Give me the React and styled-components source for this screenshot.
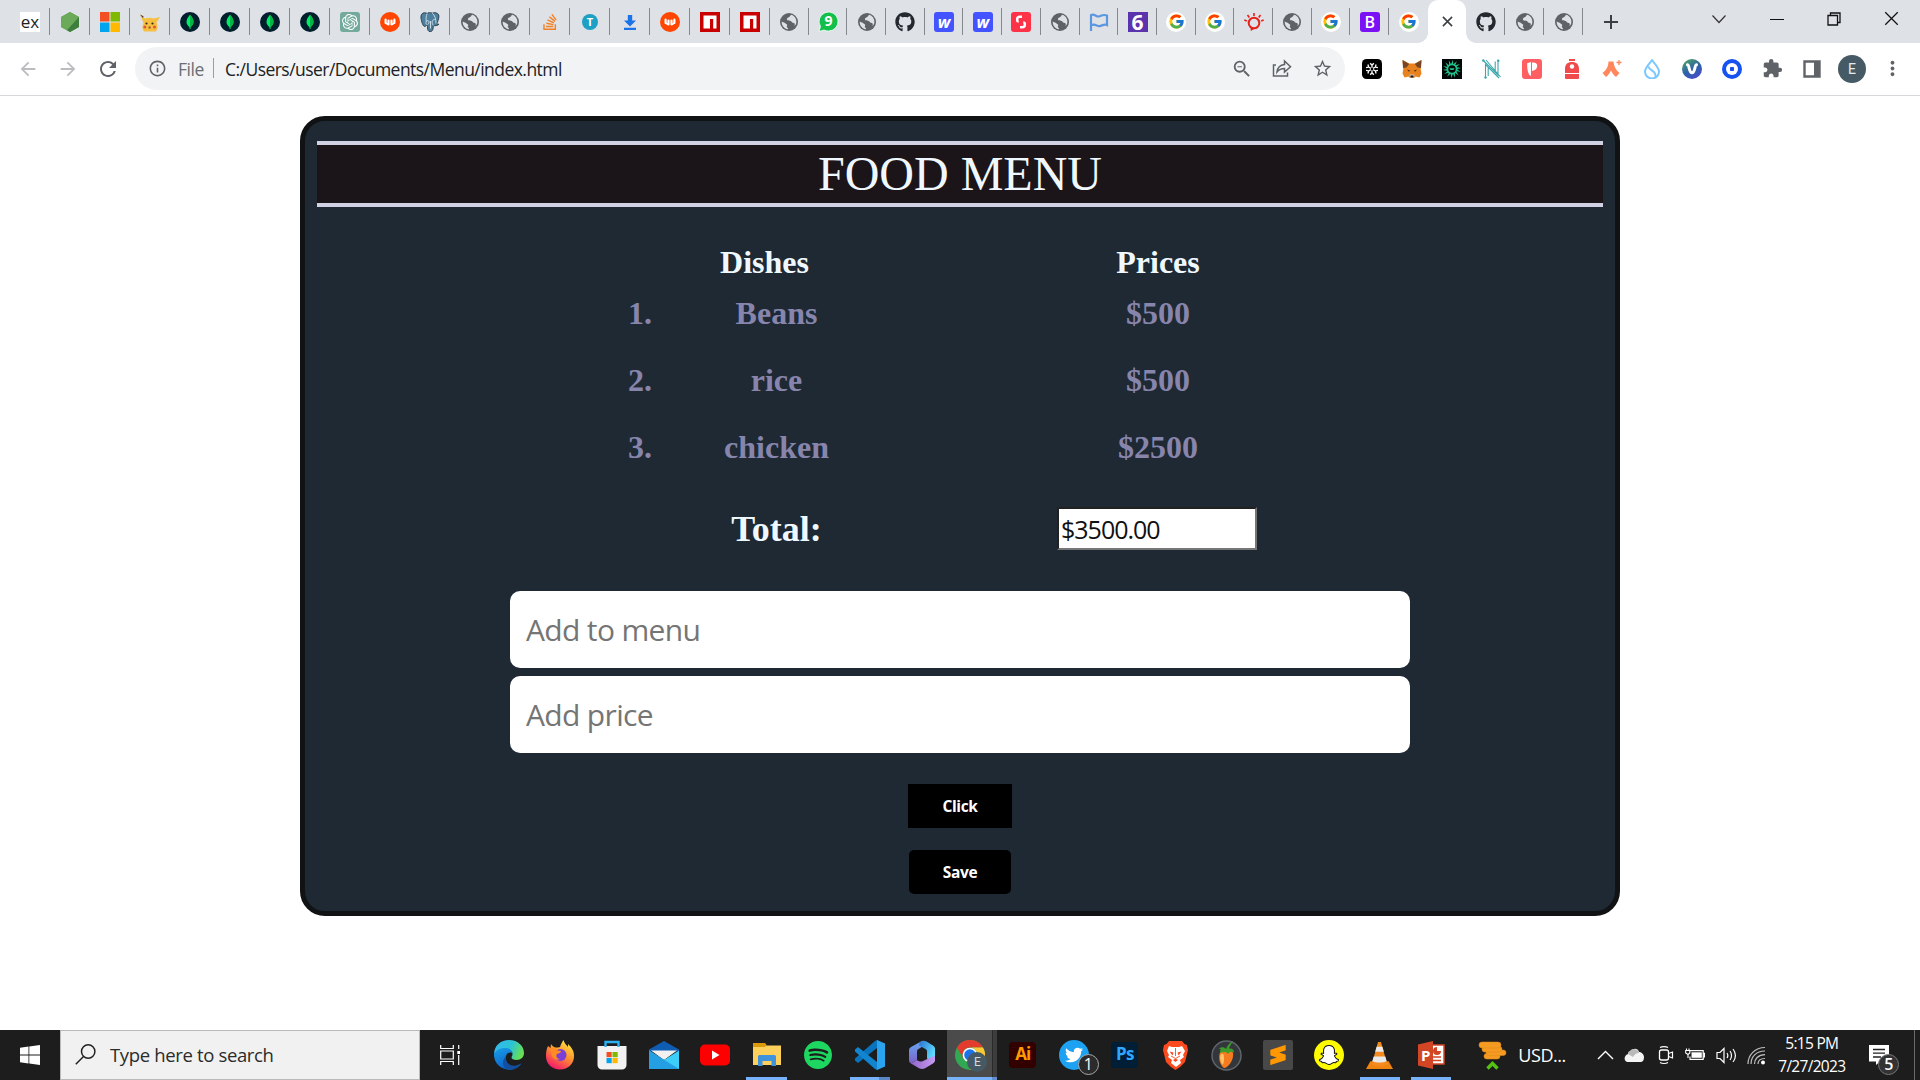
import React from "react";
import styled, { createGlobalStyle } from "styled-components";
import {
  MdArrowBack, MdArrowForward, MdRefresh, MdInfoOutline, MdZoomOut, MdStarBorder,
  MdExtension, MdMoreVert, MdAdd,
} from "react-icons/md";
import { FcGoogle } from "react-icons/fc";
import { FaGithub, FaTwitter, FaSnapchatGhost } from "react-icons/fa";
import { SiStackoverflow, SiOpenai, SiSublimetext, SiSpotify } from "react-icons/si";

const UI = `"Open Sans", "Noto Sans", sans-serif`;
const SERIF = `"Liberation Serif", "Times New Roman", serif`;

const Global = createGlobalStyle`
  *, *::before, *::after { box-sizing: border-box; }
  body { margin: 0; background: #fff; overflow: hidden; }
  svg { display: block; flex: none; }
`;

const Screen = styled.div`
  width: 1920px;
  height: 1080px;
  display: flex;
  flex-direction: column;
  font-family: ${UI};
  overflow: hidden;
`;

/* ---------- tab strip ---------- */
const TabStrip = styled.div`
  height: 43px;
  background: #dee1e6;
  display: flex;
  padding-left: 10px;
  flex: none;
`;
const Tab = styled.div`
  width: ${(p) => p.$w || 40}px;
  height: 43px;
  display: flex;
  align-items: center;
  justify-content: center;
  flex: none;
  padding-left: 1px;
  border-image: ${(p) =>
    p.$line ? "linear-gradient(#0000 9px, #85888d 9px 34px, #0000 34px) 1" : "none"};
  border-right: ${(p) => (p.$line ? "1px solid" : "0")};
`;
const ActiveTab = styled.div`
  position: relative;
  width: 38.7px;
  height: 43px;
  background: #fff;
  border-radius: 10px 10px 0 0;
  display: flex;
  align-items: center;
  justify-content: center;
  flex: none;
  &::before, &::after {
    content: "";
    position: absolute;
    bottom: 0;
    width: 10px;
    height: 10px;
  }
  &::before { left: -10px; background: radial-gradient(circle at 0 0, #0000 9.5px, #fff 10px); }
  &::after { right: -10px; background: radial-gradient(circle at 100% 0, #0000 9.5px, #fff 10px); }
`;
const NewTab = styled.div`
  width: 55px;
  display: flex;
  align-items: center;
  justify-content: center;
  color: #3c4043;
`;
const WindowControls = styled.div`
  margin-left: auto;
  display: flex;
  height: 37px;
  align-items: center;
`;
const WindowButton = styled.div`
  width: 57.4px;
  display: flex;
  justify-content: center;
`;
const Tile = styled.span`
  width: 20px;
  height: 20px;
  display: flex;
  align-items: center;
  justify-content: center;
  background: ${(p) => p.$bg || "transparent"};
  color: ${(p) => p.$fg || "#fff"};
  border-radius: ${(p) => p.$r || 0}px;
  font: ${(p) => p.$font || `700 14px/20px ${UI}`};
`;
const SmallDisc = styled.span`
  width: 16px;
  height: 16px;
  border-radius: 50%;
  background: #1e9fc4;
  color: #fff;
  font: 700 11px/16px ${UI};
  text-align: center;
`;

/* ---------- toolbar ---------- */
const Toolbar = styled.div`
  height: 53px;
  background: #fff;
  border-bottom: 1px solid #d6d8db;
  display: flex;
  align-items: center;
  padding: 0 7.5px 1px 7.5px;
  flex: none;
  color: #5f6368;
`;
const NavButton = styled.div`
  width: 40px;
  height: 40px;
  display: flex;
  align-items: center;
  justify-content: center;
  color: ${(p) => (p.$off ? "#babcbe" : "#5f6368")};
`;
const AddressBar = styled.div`
  margin-left: 7.5px;
  width: 1209.5px;
  height: 43px;
  border-radius: 22px;
  background: #f1f3f4;
  display: flex;
  align-items: center;
  padding: 0 12px 0 13px;
  font-size: 17.5px;
`;
const FileLabel = styled.span`
  margin-left: 11px;
  width: 25px;
  letter-spacing: -0.45px;
  color: #6a6e73;
`;
const AddressDivider = styled.span`
  margin: 0 11px 2px 9.5px;
  width: 1.5px;
  height: 20px;
  background: #9a9da1;
`;
const Url = styled.span`
  flex: 1;
  letter-spacing: -0.54px;
  color: #202124;
`;
const PillActions = styled.div`
  display: flex;
  gap: 19.5px;
`;
const Extensions = styled.div`
  display: flex;
  margin-left: 7.6px;
`;
const ExtensionSlot = styled.div`
  width: 40px;
  height: 40px;
  display: flex;
  align-items: center;
  justify-content: center;
`;
const Avatar = styled.div`
  width: 28px;
  height: 28px;
  border-radius: 50%;
  background: #455a64;
  color: #e6eaec;
  display: flex;
  align-items: center;
  justify-content: center;
  font: 400 14px/28px Roboto, sans-serif;
`;

/* ---------- page ---------- */
const Page = styled.main`
  flex: 1;
  padding-top: 20px;
`;
const Card = styled.section`
  width: 1320px;
  height: 800px;
  margin: 0 auto;
  border: 5px solid #111214;
  border-radius: 25px;
  background: #1e2934;
  padding: 20px 12px 0;
  display: flex;
  flex-direction: column;
  align-items: center;
  font-family: ${SERIF};
`;
const Title = styled.h1`
  margin: 0;
  width: 100%;
  height: 66px;
  border: solid #d0d2e4;
  border-width: 4px 0;
  background: #1b1418;
  color: aliceblue;
  font-size: 48px;
  font-weight: 400;
  line-height: 58px;
  text-align: center;
`;
const MenuTable = styled.div`
  width: 630px;
  margin: 37px 0 0 -34px;
`;
const MenuRow = styled.div`
  display: grid;
  grid-template-columns: 66px 165px 200px;
  align-items: center;
  height: 36px;
  font-size: 32px;
  font-weight: 700;
  line-height: 36px;
  color: ${(p) => (p.$head ? "aliceblue" : "#8785ac")};
  margin-top: ${(p) => p.$gap || 0}px;
  > :nth-child(3) { margin-left: 199px; width: 200px; }
`;
const Cell = styled.span`
  text-align: ${(p) => (p.$start ? "left" : "center")};
  padding-right: ${(p) => p.$nudge || 0}px;
`;
const TotalRow = styled(MenuRow)`
  height: 43px;
  margin-top: 42px;
  grid-template-rows: 43px;
  font-size: 36px;
  line-height: 44px;
  color: aliceblue;
  > :nth-child(3) { margin-left: 198px; width: 200px; }
`;
const TotalBox = styled.input`
  height: 43px;
  padding: 1px 2px 0;
  border: 2px inset #767676;
  background: #fff;
  color: #111;
  font: 400 25px/36px ${UI};
  letter-spacing: -1px;
  outline: none;
`;
const Fields = styled.div`
  margin-top: 41px;
  display: flex;
  flex-direction: column;
  gap: 8px;
`;
const Field = styled.input`
  width: 900px;
  height: 77px;
  border: 0;
  border-radius: 10px;
  padding: 0 16px;
  font: 400 30px/40px ${UI};
  letter-spacing: -0.65px;
  outline: none;
  &::placeholder { color: #757575; opacity: 1; }
`;
const Button = styled.button`
  margin: ${(p) => p.$top}px 0 0;
  width: ${(p) => p.$w}px;
  height: 44px;
  padding: 0;
  border: 0;
  border-radius: ${(p) => p.$r}px;
  background: #000;
  color: #fff;
  font: 700 15.5px/44px ${UI};
  letter-spacing: -0.35px;
`;

/* ---------- taskbar ---------- */
const Taskbar = styled.footer`
  height: 50px;
  flex: none;
  background: #1d1d1d;
  display: flex;
  color: #fff;
`;
const Start = styled.div`
  width: 60px;
  display: flex;
  align-items: center;
  justify-content: center;
`;
const SearchBox = styled.div`
  width: 360px;
  background: #f1f1f1;
  border: 1px solid #b9b9b9;
  display: flex;
  align-items: center;
  padding: 0 0 1px 14px;
  gap: 14px;
  color: #2b2b2b;
  font-size: 18.5px;
  letter-spacing: -0.35px;
`;
const TaskView = styled.div`
  width: 60px;
  display: flex;
  align-items: center;
  justify-content: center;
`;
const Apps = styled.div`
  display: flex;
  margin-left: 3px;
`;
const TaskApp = styled.div`
  position: relative;
  width: ${(p) => p.$w || 51}px;
  height: 50px;
  display: flex;
  align-items: center;
  justify-content: center;
  font-family: ${UI};
  background: ${(p) =>
    p.$active ? "linear-gradient(90deg, #4b4b4b 45px, #2a2a2a 45px 46px, #3d3d3d 46px)" : "none"};
  &::after {
    content: "";
    position: absolute;
    left: ${(p) => (p.$active ? 0 : 5.5)}px;
    right: ${(p) => (p.$active ? 0 : 5.5)}px;
    bottom: 0;
    height: 3px;
    background: ${(p) =>
      p.$active
        ? "linear-gradient(90deg, #76b3fb 45px, #5e8fcb 45px)"
        : p.$multi
          ? "linear-gradient(90deg, #76b3fb 29px, #5b88c4 29px)"
          : p.$open
            ? "#76b3fb"
            : "none"};
  }
`;
const ActiveSlot = styled(TaskApp)`
  padding-right: 5px;
`;
const AdobeTile = styled.span`
  width: 27px;
  height: 26px;
  border-radius: 4px;
  background: ${(p) => p.$bg};
  color: ${(p) => p.$fg};
  font: 700 17px/24px ${UI};
  letter-spacing: -0.8px;
  text-align: center;
`;
const Badge = styled.span`
  position: absolute;
  left: ${(p) => p.$x}px;
  top: ${(p) => p.$y}px;
  width: 21px;
  height: 21px;
  border-radius: 50%;
  border: 1px solid ${(p) => p.$line || "#a8a8a8"};
  background: ${(p) => p.$bg || "#2b2b2b"};
  color: #fff;
  font: ${(p) => p.$weight || 400} 16px/18px ${UI};
  text-align: center;
`;
const News = styled.div`
  margin-left: 22px;
  display: flex;
  align-items: center;
  gap: 11px;
  font-size: 18px;
  letter-spacing: -0.45px;
  width: 118.5px;
`;
const Tray = styled.div`
  display: flex;
  align-items: center;
  gap: 10.2px;
`;
const Clock = styled.div`
  margin-left: 9px;
  width: 74px;
  padding-top: 2px;
  text-align: center;
  font-size: 15.5px;
  line-height: 23px;
  letter-spacing: -0.7px;
  white-space: nowrap;
`;
const Notifications = styled.div`
  position: relative;
  margin-left: 20px;
  width: 45px;
  display: flex;
  align-items: center;
`;
const ShowDesktop = styled.div`
  margin-left: auto;
  width: 6px;
  border-left: 1px solid #6a6a6a;
`;

/* ---------- drawings ---------- */
const Svg = ({ s = 20, v = 20, children, ...rest }) => (
  <svg width={s} height={s} viewBox={`0 0 ${v} ${v}`} fill="none" {...rest}>{children}</svg>
);

const Globe = () => (
  <Svg>
    <circle cx="10" cy="10" r="9" fill="#5f6368" />
    <path d="M12.800 2.800c-2 .6-1.600 2-3 2.400-1.600.4-2.600 1.800-1.400 3 1.400 1 3.400 0 4 1.400.8 1.800 2.400.8 3.200 2 .4.800.2 1.800-.4 2.600 1.600-1.300 2.200-2.700 2.200-4.200 0-3.300-1.900-6-4.600-7.200zM2.700 9.500c2 .8 4 1.800 5.300 3 .8 1-.6 1.600-.2 2.600.3.900 1.400.6 1.200 2.200-3.700-.4-6.400-3.500-6.300-7.800z" fill="#dee1e6" />
  </Svg>
);
const GitHub = () => <FaGithub size={20} color="#24292f" />;
const Google = () => <Tile $bg="#fff" $r={10}><FcGoogle size={17} /></Tile>;
const Mongo = () => (
  <Svg>
    <circle cx="10" cy="10" r="10" fill="#001e2b" />
    <path d="M10 2.800C12.900 5.800 13.500 8 13.500 10c0 2.200-1.300 3.800-2.900 5l-.3 2h-.6L9.400 15C7.800 13.800 6.500 12.200 6.500 10c0-2.200 1.100-4.400 3.500-7.200z" fill="#00ed64" />
    <path d="M10 2.800v14.200h.3l.3-2c1.600-1.200 2.900-2.800 2.900-5 0-2-.6-4.200-3.500-7.200z" fill="#00b545" />
  </Svg>
);
const Node = () => (
  <Svg>
    <path d="M10 0l9 5v10l-9 5-9-5V5z" fill="#5a9a4b" />
    <path d="M10 0l9 5-12 13.300L1 15V5z" fill="#6aaa58" />
    <path d="M19 5v10l-9 5-3-1.700z" fill="#3f7e3c" />
  </Svg>
);
const Microsoft = () => (
  <Svg>
    <path d="M0 0h9.500v9.500H0z" fill="#f25022" /><path d="M10.500 0H20v9.500h-9.500z" fill="#7fba00" />
    <path d="M0 10.500h9.500V20H0z" fill="#00a4ef" /><path d="M10.500 10.500H20V20h-9.500z" fill="#ffb900" />
  </Svg>
);
const Pikachu = () => (
  <Svg>
    <path d="M0 2.500l5 4c3-1 6-1 8.500 0L20 5l-3.500 5.500c1.500 3 1.500 6-.5 9H4c-2-2.500-2-5-.5-8.500z" fill="#f5bf42" />
    <path d="M0 2.500l3.500 1.800L3 6z" fill="#4a3320" />
    <circle cx="6.500" cy="11.500" r="1.100" fill="#3c2a1c" /><circle cx="12.500" cy="11.500" r="1.100" fill="#3c2a1c" />
    <circle cx="4.800" cy="15" r="1.500" fill="#e4572e" /><circle cx="14.500" cy="15" r="1.500" fill="#e4572e" />
    <path d="M8.500 14.500h2.200v2H8.500z" fill="#a5502c" />
  </Svg>
);
const Orange = () => (
  <Svg>
    <circle cx="10" cy="10" r="10" fill="#ff4500" />
    <path d="M5.600 7.500v3.500M8.500 8.500v4M11.500 8.500v4M14.400 7.500v3.500" stroke="#fff" strokeWidth="2.200" strokeLinecap="round" />
    <path d="M5.600 11l2.500 1.500M14.400 11l-2.500 1.500" stroke="#fff" strokeWidth="1.600" />
  </Svg>
);
const Elephant = () => (
  <Svg>
    <path d="M4.500.8C2 .8.600 3 1 6c.4 3.500 2 8 3.300 8.400 1 .3 1.800-.8 2.700-1.600.5 1 .5 1.700.6 3.200.1 2 .6 3.600 2.600 3.600s2.700-1.500 2.900-3.600l.2-2.500c1.500.4 4.200.2 5.700-1.300-1.200.2-2-.1-2.200-.7C18.500 8 19.500 4 18.500 2.500 17 .5 14 .3 12.300 1.200 10 .3 8 .6 7.200 1.500 6.500 1 5.500.8 4.500.8z" fill="#4d7f9f" stroke="#2b4250" strokeWidth="1" />
    <path d="M7.200 1.500C5.800 4 6 8 6.300 9.500M12.300 1.200c2.700 2 3.700 6.500 3.700 10.300M7 12.800c-1-1-1.500-2-.7-3.500 1-1.200 2.700-.6 2.700.4 0 2-.6 2.200-1.400 3M13.300 13.500c-1.500-2-2-6 1.500-6M10.500 9v7.500" stroke="#d5e2ea" strokeWidth=".9" />
  </Svg>
);
const Npm = () => (
  <Svg>
    <path d="M0 0h20v20H0z" fill="#c80000" /><path d="M3.500 3.500h13v13h-3.300V7H10v9.500H3.500z" fill="#fff" />
  </Svg>
);
const Download = () => (
  <Svg><path d="M7.800 3h4.400v5.500H16L10 14.500 4 8.500h3.800zM4 15.700h12V18H4z" fill="#1a73e8" /></Svg>
);
const WhatsApp = () => (
  <Svg s={21} v={21}>
    <path d="M1 20.500l1.500-5A9.500 9.500 0 1110.500 20a9 9 0 01-4.500-1z" fill="#12bf4b" stroke="#f4fff7" strokeWidth=".8" />
    <text x="10.500" y="15.300" textAnchor="middle" fontFamily="Open Sans" fontWeight="700" fontSize="14" fill="#fff">9</text>
  </Svg>
);
const RedS = () => (
  <Svg>
    <rect width="20" height="20" rx="3" fill="#ff3347" />
    <path d="M11 4.800H8.800c-1.600 0-2.600.8-2.600 2.200V8.200c0 .8.500 1.300 1.500 1.300M9 15.200h2.200c1.600 0 2.600-.8 2.600-2.200v-1.200c0-.8-.5-1.300-1.500-1.300" stroke="#fff" strokeWidth="2.500" />
  </Svg>
);
const Flag = () => (
  <Svg><path d="M2 19V3.200c3-2.500 5 2 8 1.200 2.500-.6 4-2.400 8-.9v9.600c-3-1.500-5 .8-7.500 1S5.500 11 2 13.500" stroke="#5b97e0" strokeWidth="2.200" /></Svg>
);
const Bulb = () => (
  <Svg>
    <circle cx="10" cy="11" r="5.300" stroke="#e5221a" strokeWidth="2" />
    <path d="M6.500 15.500L6.800 19l5-3" fill="#e5221a" /><path d="M10 1v3M3.500 3l1.800 2.500M16.500 3l-1.800 2.500M.3 8l2.500 1M19.700 8l-2.500 1" stroke="#e5221a" strokeWidth="1.600" />
  </Svg>
);
const CloseX = ({ s = 11, w = 1.7, c = "#3c4043" }) => (
  <Svg s={s} v={12}><path d="M1 1l10 10M11 1L1 11" stroke={c} strokeWidth={w} /></Svg>
);

const wideTabs = [
  <Tile $bg="#fff" $fg="#222" $font={`400 17px/18px ${UI}`}>ex</Tile>, <Node />, <Microsoft />, <Pikachu />,
  <Mongo />, <Mongo />, <Mongo />, <Mongo />,
  <Tile $bg="#74aa9c" $r={3}><SiOpenai size={16} /></Tile>, <Orange />,
  <Elephant />, <Globe />, <Globe />,
  <SiStackoverflow size={16} color="#f48024" />,
  <SmallDisc>T</SmallDisc>, <Download />,
  <Orange />, <Npm />, <Npm />,
];
const Webflow = () => <Tile $bg="#4353ff" $r={3} $font={`italic 700 16px/18px ${UI}`}>w</Tile>;
const narrowTabs = [
  <Globe />, <WhatsApp />, <Globe />, <GitHub />, <Webflow />, <Webflow />, <RedS />, <Globe />, <Flag />,
  <Tile $bg="#5b34ad" $font={`700 21px/20px ${UI}`}>6</Tile>, <Google />, <Google />, <Bulb />, <Globe />, <Google />,
  <Tile $bg="#7a12f5" $r={3} $font={`600 16px/20px ${UI}`}>B</Tile>, <Google />,
];
const lastTabs = [<GitHub />, <Globe />, <Globe />];

const Snowflake = () => (
  <Svg>
    <rect width="20" height="20" rx="4.500" fill="#000" />
    {[0, 60, 120, 180, 240, 300].map((a) => (
      <path key={a} d="M10 8.800V6.500M8.200 4.200l1.800 2 1.800-2" stroke="#fff" strokeWidth="1.300" transform={`rotate(${a} 10 10)`} />
    ))}
  </Svg>
);
const Fox = () => (
  <Svg>
    <path d="M.5 1l6.700 3.500h5.600L19.500 1l-.8 9 .8 4.500-2 4-4-1-1.500 1.500H8l-1.500-1.500-4 1-2-4L1.300 10z" fill="#e8821e" />
    <path d="M.5 1l6.700 4-2.700 3.500L1 9zM19.500 1l-6.700 4 2.700 3.500L19 9z" fill="#7a4524" />
    <path d="M5 10.500l3 1-1 1.300zM15 10.500l-3 1 1 1.300z" fill="#3a2b20" /><path d="M7.500 15.500h5l-.5 3H8z" fill="#d9c7b5" /><path d="M8.500 16.500h3v2h-3z" fill="#161616" />
  </Svg>
);
const GreenSun = () => (
  <Svg>
    <path d="M0 0h20v20H0z" fill="#020807" />
    <circle cx="10" cy="10" r="4.500" stroke="#21c48b" strokeWidth="1.500" />
    {Array.from({ length: 14 }, (_, i) => (
      <path key={i} d="M8.800 5.800L11 .8l.2 5" fill="#21c48b" transform={`rotate(${i * 25.714} 10 10)`} />
    ))}
    <path d="M7.500 9.300h5L11.500 11h-3z" fill="#21c48b" />
  </Svg>
);
const Circuit = () => (
  <Svg>
    <path d="M3.500 18V5.500L17 19M1.300 1.500L16 16V2.500M6.200 17V8.500M13.200 2.500V12M4 1l14.500 17" stroke="#3ea6aa" strokeWidth="1.100" />
    <circle cx="1.300" cy="1.500" r="1.200" fill="#3ea6aa" /><circle cx="16.200" cy="1.800" r="1.300" fill="#3ea6aa" /><circle cx="3.500" cy="18.500" r="1.200" fill="#3ea6aa" />
  </Svg>
);
const Pocket = () => (
  <Svg>
    <rect width="20" height="20" rx="3" fill="#ff5f63" />
    <path d="M5.200 4.300L9 3v14l-2-1.500c-1.500-3-2-7-1.800-11.200z" fill="#fff" /><path d="M10 3.500c3.500-.5 5.300 1 5.200 3.500s-1.700 4.500-5.200 5z" fill="#fff" />
  </Svg>
);
const Backpack = () => (
  <Svg>
    <path d="M7 0h6v2H7zM3 10c0-4.500 2.500-7 7-7s7 2.500 7 7v4H3zM3 15h14v3.500c0 1-.5 1.500-1.500 1.500h-11C3.500 20 3 19.500 3 18.500z" fill="#f04a4c" />
    <circle cx="10" cy="7.500" r="2.200" fill="#fff" />
  </Svg>
);
const Argent = () => (
  <Svg>
    <path d="M6.500 2.500h5c.3 5 2.500 8.500 6 11.500l-3.500 4c-2.300-2-4-4-5-6.500C8 14 6.300 16 4 18L.5 14C4.500 11 6.300 7.500 6.500 2.500z" fill="#ff875b" />
    <path d="M17 1v5M14.500 3.500h5" stroke="#ff875b" strokeWidth="1.300" />
  </Svg>
);
const Drop = () => (
  <Svg>
    <path d="M10 1.200C13 5 17 9 17 12.500a7 7 0 01-14 0C3 9 7 5 10 1.200z" stroke="#7cc8ff" strokeWidth="2" />
    <path d="M6.500 7.500c.5 4.500 8.500 4 7 11" stroke="#7cc8ff" strokeWidth="2" />
  </Svg>
);
const Venom = () => (
  <Svg>
    <defs><linearGradient id="vg" x1="0" y1="0" x2=".6" y2="1"><stop offset="0" stopColor="#52ad58" /><stop offset=".6" stopColor="#2d62a9" /><stop offset="1" stopColor="#4450c4" /></linearGradient></defs>
    <circle cx="10" cy="10" r="10" fill="url(#vg)" />
    <path d="M5.500 5.800c2 .5 1.500 8 4.500 8s2.500-7.500 4.500-8" stroke="#fff" strokeWidth="3" strokeLinecap="round" strokeLinejoin="round" />
  </Svg>
);
const BlueRing = () => (
  <Svg>
    <circle cx="10" cy="10" r="10" fill="#1652f0" /><circle cx="10" cy="10" r="6" fill="#fff" /><rect x="8" y="8" width="4" height="4" rx=".8" fill="#1652f0" />
  </Svg>
);
const SidePanel = () => (
  <Svg s={18} v={18}><path d="M1.500 1.500h15v15h-15z" stroke="#5f6368" strokeWidth="2.400" /><path d="M11 1h6v16h-6z" fill="#5f6368" /></Svg>
);
const Share = () => (
  <Svg><path d="M4 7H1.500v11h14v-3.500M5 14c.5-4.500 3-7 7.500-7.500V3l6 5.700-6 5.300v-3.500c-3.500 0-5.500 1-7.500 3.500z" stroke="#5f6368" strokeWidth="1.500" /></Svg>
);

const Edge = () => (
  <Svg s={30} v={30}>
    <defs>
      <linearGradient id="e1" x1="0" y1=".2" x2="1" y2=".5"><stop stopColor="#35b8f1" /><stop offset=".55" stopColor="#2cc3d4" /><stop offset="1" stopColor="#6ae04f" /></linearGradient>
      <linearGradient id="e2" x1="0" y1="0" x2=".4" y2="1"><stop stopColor="#1a9fe8" /><stop offset="1" stopColor="#0a63c9" /></linearGradient>
    </defs>
    <path d="M0 14C.5 5 7 0 15 0c9 0 15 6 15 13 0 4-3 7-7.500 7-3 0-5-1-5-2.500 0-1 1-1.500 1-3.500 0-3-3-5-7-5-5.500 0-9 2.500-11.500 5z" fill="url(#e1)" />
    <path d="M0 14c2-4 6-6 11-6 4.500 0 7.500 2.500 7.500 5.500-1-1.500-5.500-1.500-6.500 2.500-1.200 5 2 10 8 13C9 32-.5 24 0 14z" fill="url(#e2)" />
    <path d="M12 16c-2 7 5 10.500 10 9.500 2-.5 4-1.500 5.500-2.200C25 28 20 30 15 30c-5-1-9-7-3-14z" fill="#12509f" />
  </Svg>
);
const Firefox = () => (
  <Svg s={30} v={30}>
    <defs><linearGradient id="ff" x1=".85" y1="0" x2=".3" y2="1"><stop stopColor="#fff04a" /><stop offset=".45" stopColor="#ff9a2b" /><stop offset="1" stopColor="#f5156c" /></linearGradient></defs>
    <path d="M3 6l2.500 2 .5-4c1.500 2 3 3.500 5 3.500 1 0 3 0 4-.5C16 4 17 2 18.500 0c.5 3 3 5 4.500 7V4c4 4 6 7 6 12 0 8-6 13.500-14 13.500S1 24 1 16c0-4 .5-7 2-10z" fill="url(#ff)" />
    <circle cx="15.500" cy="15" r="6" fill="#7a3fd6" />
    <path d="M4 9c3-1.500 7-1 8.500 1.500l3.500.5c0 2-2 2.500-4 3-1.500 2 0 5 3 5-4 2-9-1-8.500-6z" fill="#ff8b25" />
  </Svg>
);
const Store = () => (
  <Svg s={30} v={30}>
    <path d="M.5 6h29v19a4.500 4.500 0 01-4.500 4.500H5A4.500 4.500 0 01.5 25z" fill="#f2f2f2" />
    <path d="M8.500 7V2h13v5" stroke="#2bb0f2" strokeWidth="2.400" />
    <path d="M9.500 12h5.200v5.200H9.500z" fill="#f25022" /><path d="M15.500 12h5.200v5.200h-5.200z" fill="#7fba00" /><path d="M9.500 18h5.200v5.200H9.500z" fill="#00a4ef" /><path d="M15.500 18h5.200v5.200h-5.200z" fill="#ffb900" />
  </Svg>
);
const Mail = () => (
  <Svg s={30} v={30}>
    <path d="M0 9.500L15 1l15 8.500v2H0z" fill="#0f5cb3" /><path d="M2 10.500h26L15 20z" fill="#f1f1f1" />
    <path d="M0 10.500L15 20l15-9.500V29H0z" fill="#3ccdf8" /><path d="M0 10.500L30 29H0z" fill="#259fe4" />
  </Svg>
);
const YouTube = () => (
  <Svg s={30} v={30}><rect y="4.500" width="30" height="21" rx="5" fill="#f00" /><path d="M12 10.500v9l7.500-4.500z" fill="#fff" /></Svg>
);
const Explorer = () => (
  <Svg s={28} v={28}>
    <path d="M0 2h11l2.500 2.500H28V24H0z" fill="#fdd05c" /><path d="M0 2h12l1.500 2L12 6H0z" fill="#dc9a0b" />
    <path d="M5 25V16c0-1.500.7-2 2-2h14c1.300 0 2 .5 2 2v9h-4.500v-5h-9v5z" fill="#3f93dc" />
  </Svg>
);
const VSCode = () => (
  <Svg s={30} v={30}>
    <path d="M22 0l8 3.500v23L22 30z" fill="#2aa4ef" /><path d="M22 8L3 23 0 20.500v-2L20 1l2-1z" fill="#0a73bd" /><path d="M22 22L3 7 0 9.500v2L20 29l2 1z" fill="#1285d0" />
  </Svg>
);
const Office = () => (
  <Svg s={30} v={30}>
    <defs>
      <linearGradient id="o1" x1="0" y1="0" x2="0" y2="1"><stop stopColor="#66a8f2" /><stop offset="1" stopColor="#7d63c9" /></linearGradient>
      <linearGradient id="o2" x1="0" y1="0" x2="1" y2=".6"><stop stopColor="#2a6fd0" /><stop offset="1" stopColor="#5fe0ff" /></linearGradient>
      <linearGradient id="o3" x1="0" y1="0" x2="1" y2="0"><stop stopColor="#8f62c8" /><stop offset="1" stopColor="#c79af2" /></linearGradient>
    </defs>
    <path d="M15 1L4 7c-1.500 1-2 2-2 3.500V20c0 2 1.500 3 3 3l5-3V11.500c0-1 .5-2 1.500-2.500L18 5z" fill="url(#o1)" />
    <path d="M15 1c1.500-.5 3-.3 4 .3l7 4.200c1.300.8 2 2 2 3.500v10c0 1-.5 2-1.500 2.500l-6.500-3V11.500c0-1-.5-2-1.500-2.500L12 5.500C12 3 13.500 1.500 15 1z" fill="url(#o2)" />
    <path d="M2 20c.5 2 2 3 3 3l5-3c1.500 1.500 4 2 6 1l12-5.500V20c0 1.500-.7 2.700-2 3.500l-8 4.800c-2 1-4 1-6 0l-8-4.800c-1.300-.8-2-2-2-3.500z" fill="url(#o3)" />
  </Svg>
);
const Chrome = () => (
  <Svg s={30} v={30}>
    <circle cx="15" cy="15" r="15" fill="#33a852" />
    <path d="M2 7.500A15 15 0 0128 7.500H15a7.500 7.500 0 00-6.500 11.200z" fill="#e33b2e" />
    <path d="M28 7.500A15 15 0 0115 30l6.500-11.300A7.500 7.500 0 0015 7.500z" fill="#fcc934" />
    <circle cx="15" cy="15" r="7.300" fill="#fff" /><circle cx="15" cy="15" r="5.800" fill="#1a73e8" />
  </Svg>
);
const ChromeBadge = styled.span`
  position: absolute;
  left: 20px;
  top: 22px;
  width: 20px;
  height: 20px;
  border-radius: 50%;
  background: #455a64;
  color: #d5dcdf;
  font: 400 12px/20px Roboto, sans-serif;
  text-align: center;
`;
const Disc = styled.span`
  width: 30px;
  height: 30px;
  border-radius: ${(p) => (p.$square ? 2 : 15)}px;
  display: flex;
  align-items: center;
  justify-content: center;
  background: ${(p) => p.$bg};
`;
const Brave = () => (
  <Svg s={29} v={29}>
    <path d="M8 0h13l2.500 3 2.500 1 1 5-3 12-5 5-4.500 3L10 26l-5-5L2 9l1-5 2.500-1z" fill="#fb4a1d" />
    <path d="M8 5l3 1h7l3-1 3 5-2 4 1 2-4 3 1 3-5 4-5-4 1-3-4-3 1-2-2-4z" fill="#fff" />
    <path d="M8.500 10.500l4 1-1 3zM20.500 10.500l-4 1 1 3zM12 19l2.500-1.500L17 19l-2.500 2z" fill="#fb4a1d" /><path d="M14.500 7v8M10 15l4.500 2.500L19 15" stroke="#fb4a1d" strokeWidth=".9" />
  </Svg>
);
const FLStudio = () => (
  <Svg s={31} v={31}>
    <circle cx="15.500" cy="15.500" r="14.500" fill="#33373b" stroke="#5e666c" strokeWidth="1.500" />
    <path d="M8.500 14C10 8 19 8 22 13c1 5-3 13-8 15-3 .5-7-7-5.500-14z" fill="#f47b20" /><path d="M10 14c2-1 3 0 3 4s-1 6-1 7c-3-3-3.500-8-2-11z" fill="#ffc36a" />
    <path d="M8 8.500c3-2 5-1.500 7 .5 1-3 3-6 7-8-1.500 3-3.500 5-4 7.500 3-.5 5 1 5 4-2.500-1.500-4.500-1-6 1.500-2-2.500-5-2.500-8-1 0-2 0-3 1-3.500z" fill="#3f9a2d" />
  </Svg>
);
const Vlc = () => (
  <Svg s={27} v={28}>
    <path d="M4.500 20h19L28 28H0z" fill="#f08410" /><path d="M12.500 0h3l6.500 23c-4 3-12 3-16 0z" fill="#f58a1f" />
    <path d="M11 5h6l1.500 5h-9zM8 15h12l1.500 5c-4 1.800-11 1.800-15 0z" fill="#e9e9e9" />
  </Svg>
);
const PowerPoint = () => (
  <Svg s={28} v={28}>
    <path d="M14 4h13v19H14z" fill="#fff" stroke="#d24625" strokeWidth="1.500" /><path d="M16 16h8M16 19.500h8" stroke="#d24625" strokeWidth="1.500" />
    <path d="M20 6v4h4a4 4 0 11-4-4z" fill="#d24625" /><path d="M1 3.500L16 0v28L1 24.500z" fill="#d24625" />
    <text x="4" y="19.500" fontFamily="Open Sans" fontWeight="700" fontSize="15" fill="#fff">P</text>
  </Svg>
);
const Coins = () => (
  <Svg s={29} v={29}>
    <g fill="#f59a22" stroke="#e08a18" strokeWidth=".5">
      <rect x="6" y="12.500" width="16" height="5.500" rx="2.700" /><rect x="8" y="9" width="20" height="5.500" rx="2.700" /><rect x="4" y="5.500" width="20" height="5.500" rx="2.700" /><rect x="1" y="1" width="22" height="6" rx="3" />
    </g>
    <path d="M9.500 27.500l5-5 5 5" stroke="#55c311" strokeWidth="3.400" />
  </Svg>
);
const WindowsLogo = () => (
  <Svg><path d="M0 2.800l8.500-1.200v8H0zM9.300 1.500L20 0v9.600H9.300zM0 10.400h8.500v8L0 17.200zM9.300 10.400H20V20L9.300 18.500z" fill="#fff" /></Svg>
);
const Magnifier = () => (
  <Svg s={21} v={21}><circle cx="13.200" cy="7.500" r="6.700" stroke="#222" strokeWidth="1.500" /><path d="M8.500 12.500L.8 20.200" stroke="#222" strokeWidth="1.500" /></Svg>
);
const TaskViewIcon = () => (
  <Svg><path d="M.7 0v3.500h12.600V0M.7 20v-3.500h12.600V20M.7 6h12.600v8H.7zM18.700 0v4M18.700 10v10" stroke="#fff" strokeWidth="1.200" /><path d="M17.300 6h2.700v3h-2.700z" fill="#fff" /></Svg>
);

const TrayIcons = () => (
  <Tray>
    <Svg s={17} v={17}><path d="M1 12l7.500-7.500L16 12" stroke="#fff" strokeWidth="1.400" /></Svg>
    <Svg s={21} v={21}><path d="M4 9c0-2 1-3 3-3 2-3 7-3 8 1 2 0 5 2 5 5s-1 5-4 5H4c-4 0-5-6 0-8z" fill="#f4f4f4" /><path d="M4 9c1-3 3-5 6-5 3 .5 5 2 5 4-3 0-5 2-6 4L4 9z" fill="#b9b9b9" /></Svg>
    <Svg><rect x="4.500" y="5" width="9" height="10" rx="2" stroke="#fff" strokeWidth="1.300" /><path d="M13.500 8.500L17.500 7v6l-4-1.500M5 2.500c2-1.300 6-1.300 8 0M5 17.500c2 1.300 6 1.300 8 0" stroke="#fff" strokeWidth="1.200" /></Svg>
    <Svg><path d="M4.500 5.600h13.700v8.800H5v-3M18.500 8.300h1v3.500h-1" stroke="#fff" strokeWidth="1.200" /><path d="M6.500 7.300h10.300v5.500H6.500z" fill="#fff" /><path d="M1.500 3.500v2M4 3.500v2M.7 5.500h4.100V8L3 9.500.7 8zM3 9v4" stroke="#fff" strokeWidth="1.100" /></Svg>
    <Svg s={21} v={21}><path d="M1 7.500h3l4-4v14l-4-4H1zM11 8c1 1.500 1 3.500 0 5M14 6c2 2.500 2 6.500 0 9M17 4c3 4 3 9 0 13" stroke="#fff" strokeWidth="1.200" /></Svg>
    <Svg s={19} v={19}><path d="M4 18C4 11 9 5 18 5M7.500 18C7.500 13 11 8.700 18 8.700M11 18c0-3 2-5.500 7-5.500M1 18C1 9 8 1.500 18 1.500" stroke="#bfbfbf" strokeWidth="1.200" /><circle cx="16" cy="16.500" r="2" fill="#fff" /></Svg>
  </Tray>
);

const dishes = [
  ["Beans", "$500"],
  ["rice", "$500"],
  ["chicken", "$2500"],
];

const extensions = [
  <Snowflake />, <Fox />, <GreenSun />, <Circuit />, <Pocket />, <Backpack />, <Argent />, <Drop />, <Venom />,
  <BlueRing />, <MdExtension size={21} />, <SidePanel />, <Avatar>E</Avatar>, <MdMoreVert size={23} />,
];

export default function App() {
  return (
    <Screen>
      <Global />
      <TabStrip>
        {wideTabs.map((icon, i) => <Tab key={i} $line>{icon}</Tab>)}
        {narrowTabs.map((icon, i) => <Tab key={i} $w={38.7} $line={i < narrowTabs.length - 1}>{icon}</Tab>)}
        <ActiveTab><CloseX /></ActiveTab>
        {lastTabs.map((icon, i) => <Tab key={i} $w={39} $line>{icon}</Tab>)}
        <NewTab><MdAdd size={24} /></NewTab>
        <WindowControls>
          <WindowButton><Svg s={14} v={14}><path d="M.5 3.500L7 10.500l6.500-7" stroke="#333" strokeWidth="1.200" /></Svg></WindowButton>
          <WindowButton><Svg s={14} v={14}><path d="M0 7.500h14" stroke="#111" /></Svg></WindowButton>
          <WindowButton><Svg s={14} v={14}><path d="M1 3.500h9.500v9.500H1zM3.500 3.500V1H13v9.500h-2.500" stroke="#111" strokeWidth="1.300" /></Svg></WindowButton>
          <WindowButton><CloseX s={15} w={1} c="#111" /></WindowButton>
        </WindowControls>
      </TabStrip>
      <Toolbar>
        <NavButton $off><MdArrowBack size={22} /></NavButton>
        <NavButton $off><MdArrowForward size={22} /></NavButton>
        <NavButton><MdRefresh size={24} /></NavButton>
        <AddressBar>
          <MdInfoOutline size={19} />
          <FileLabel>File</FileLabel>
          <AddressDivider />
          <Url>C:/Users/user/Documents/Menu/index.html</Url>
          <PillActions><MdZoomOut size={22} /><Share /><MdStarBorder size={21} /></PillActions>
        </AddressBar>
        <Extensions>
          {extensions.map((icon, i) => <ExtensionSlot key={i}>{icon}</ExtensionSlot>)}
        </Extensions>
      </Toolbar>

      <Page>
        <Card>
          <Title>FOOD MENU</Title>
          <MenuTable>
            <MenuRow $head><Cell /><Cell $nudge={24}>Dishes</Cell><Cell>Prices</Cell></MenuRow>
            {dishes.map(([name, price], i) => (
              <MenuRow key={name} $gap={i ? 31 : 15}>
                <Cell $start>{i + 1}.</Cell><Cell>{name}</Cell><Cell>{price}</Cell>
              </MenuRow>
            ))}
            <TotalRow><Cell /><Cell>Total:</Cell><TotalBox readOnly value="$3500.00" /></TotalRow>
          </MenuTable>
          <Fields>
            <Field placeholder="Add to menu" />
            <Field placeholder="Add price" />
          </Fields>
          <Button $top={31} $w={104} $r={0}>Click</Button>
          <Button $top={22} $w={102} $r={5}>Save</Button>
        </Card>
      </Page>

      <Taskbar>
        <Start><WindowsLogo /></Start>
        <SearchBox><Magnifier />Type here to search</SearchBox>
        <TaskView><TaskViewIcon /></TaskView>
        <Apps>
          <TaskApp $w={51.6}><Edge /></TaskApp>
          <TaskApp $w={51.6}><Firefox /></TaskApp>
          <TaskApp $w={51.6}><Store /></TaskApp>
          <TaskApp $w={51.6}><Mail /></TaskApp>
          <TaskApp $w={51.6}><YouTube /></TaskApp>
          <TaskApp $w={51.6} $open><Explorer /></TaskApp>
          <TaskApp $w={51.6}><SiSpotify size={28} color="#1ed760" /></TaskApp>
          <TaskApp $w={51.6} $multi><VSCode /></TaskApp>
          <TaskApp $w={51.6}><Office /></TaskApp>
          <ActiveSlot $w={50} $active><Chrome /><ChromeBadge>E</ChromeBadge></ActiveSlot>
          <TaskApp><AdobeTile $bg="#330000" $fg="#ff9a00">Ai</AdobeTile></TaskApp>
          <TaskApp><Disc $bg="#1da1f2"><FaTwitter size={18} /></Disc><Badge $x={29.5} $y={24}>1</Badge></TaskApp>
          <TaskApp><AdobeTile $bg="#001e36" $fg="#31a8ff">Ps</AdobeTile></TaskApp>
          <TaskApp><Brave /></TaskApp>
          <TaskApp><FLStudio /></TaskApp>
          <TaskApp><Disc $bg="#484848" $square><SiSublimetext size={20} color="#ff9800" /></Disc></TaskApp>
          <TaskApp><Disc $bg="#fffc00"><FaSnapchatGhost size={20} color="#fff" stroke="#111" strokeWidth={26} /></Disc></TaskApp>
          <TaskApp $open><Vlc /></TaskApp>
          <TaskApp $open><PowerPoint /></TaskApp>
        </Apps>
        <News><Coins />USD...</News>
        <TrayIcons />
        <Clock>5:15 PM<br />7/27/2023</Clock>
        <Notifications>
          <Svg><path d="M0 0h20v16.500H11L7 20v-3.500H0z" fill="#fff" /><path d="M4 4.500h12M4 8.200h12M4 12h8" stroke="#222" strokeWidth="1.300" /></Svg>
          <Badge $x={9.5} $y={24} $weight={600} $line="#777" $bg="#333">5</Badge>
        </Notifications>
        <ShowDesktop />
      </Taskbar>
    </Screen>
  );
}
